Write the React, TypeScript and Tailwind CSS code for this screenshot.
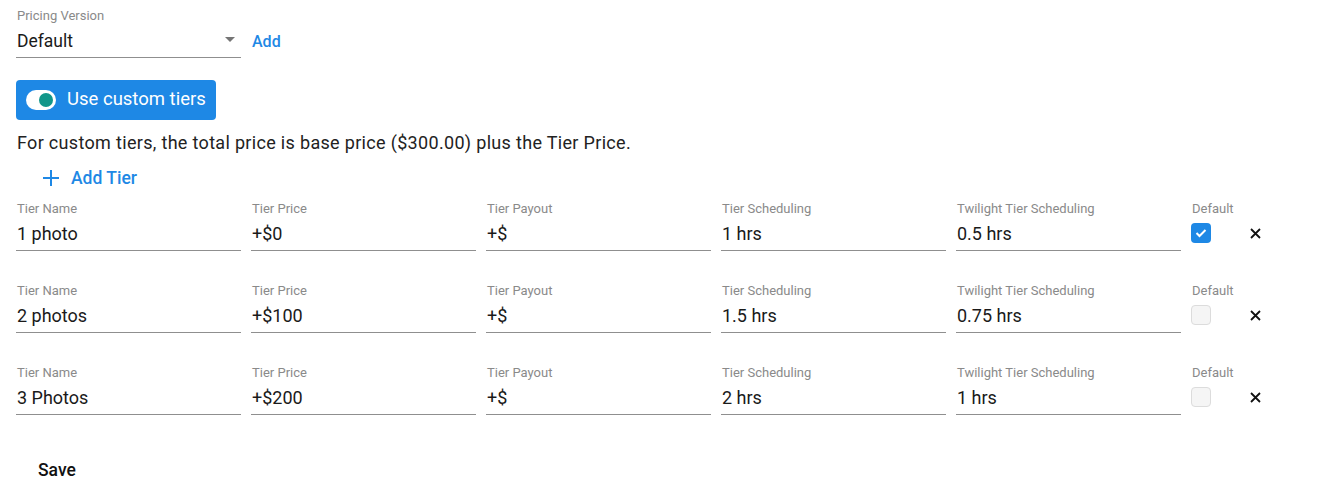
import React from 'react';

const tiers = [
  { name: '1 photo', price: '+$0', payout: '+$', sched: '1 hrs', twilight: '0.5 hrs', isDefault: true },
  { name: '2 photos', price: '+$100', payout: '+$', sched: '1.5 hrs', twilight: '0.75 hrs', isDefault: false },
  { name: '3 Photos', price: '+$200', payout: '+$', sched: '2 hrs', twilight: '1 hrs', isDefault: false },
];

const Field: React.FC<{ label: string; value: string }> = ({ label, value }) => (
  <div className="w-[225px] flex flex-col">
    <span className="text-[13px] leading-[14px] text-[#8a8a8a] pl-px">{label}</span>
    <div className="h-[35px] pt-[6px] leading-[24px] border-b border-[#8f8f8f] text-[18px] text-[#1a1a1a] pl-px">
      {value}
    </div>
  </div>
);

const App: React.FC = () => {
  return (
    <div className="w-[1342px] h-[494px] bg-white font-['Roboto',sans-serif] text-[#1a1a1a] px-4 pt-[9px]">
      {/* Pricing version select */}
      <div className="flex items-end gap-[11px]">
        <div className="w-[225px] flex flex-col">
          <span className="text-[13px] leading-[14px] text-[#8a8a8a] pl-px">Pricing Version</span>
          <div className="h-[35px] pt-[6px] leading-[24px] flex justify-between border-b border-[#8f8f8f] text-[17.5px] pl-px pr-[6px]">
            <span>Default</span>
            <svg className="mt-[8px]" width="10" height="5" viewBox="0 0 10 5"><path d="M0 0h10L5 5z" fill="#757575" /></svg>
          </div>
        </div>
        <button className="text-[16px] font-medium text-[#1e88e5] mb-[4px]">Add</button>
      </div>

      {/* Custom tiers toggle */}
      <button className="mt-[22px] w-[200px] h-[40px] rounded-[4px] bg-[#1e88e5] flex items-center gap-[11px] pl-[10px] text-white text-[18.5px]">
        <span className="w-[30px] h-[20px] rounded-full bg-white flex items-center justify-end pr-[3px]">
          <span className="w-[14px] h-[14px] rounded-full bg-[#11968a]" />
        </span>
        Use custom tiers
      </button>

      <p className="mt-[11px] text-[18px] leading-[24px] tracking-[0.32px] pl-px text-[#222]">
        For custom tiers, the total price is base price ($300.00) plus the Tier Price.
      </p>

      <button className="mt-[11px] h-[24px] ml-[26px] flex items-center gap-[11px] text-[#1e88e5] text-[17.5px] font-medium">
        <svg width="18" height="18" viewBox="0 0 18 18"><path d="M9 1v16M1 9h16" stroke="#1e88e5" strokeWidth="2" /></svg>
        Add Tier
      </button>

      {/* Tiers */}
      <div className="mt-[12px] flex flex-col gap-[33px]">
        {tiers.map((t) => (
          <div key={t.name} className="flex items-start gap-[10px]">
            <Field label="Tier Name" value={t.name} />
            <Field label="Tier Price" value={t.price} />
            <Field label="Tier Payout" value={t.payout} />
            <Field label="Tier Scheduling" value={t.sched} />
            <Field label="Twilight Tier Scheduling" value={t.twilight} />
            <div className="flex flex-col">
              <span className="text-[13px] leading-[14px] text-[#8a8a8a] pl-px">Default</span>
              <div className="mt-[7px] flex items-center">
                {t.isDefault ? (
                  <span className="w-[20px] h-[20px] rounded-[4px] bg-[#1e88e5] flex items-center justify-center">
                    <svg width="12" height="10" viewBox="0 0 12 10"><path d="M1.5 5l3 3 6-6" stroke="white" strokeWidth="2" fill="none" /></svg>
                  </span>
                ) : (
                  <span className="w-[20px] h-[20px] rounded-[4px] bg-[#f5f5f5] border border-[#dcdcdc]" />
                )}
                <svg className="ml-[39px]" width="11" height="11" viewBox="0 0 11 11"><path d="M1 1l9 9M10 1l-9 9" stroke="#111" strokeWidth="1.8" /></svg>
              </div>
            </div>
          </div>
        ))}
      </div>

      <button className="mt-[42px] h-[24px] ml-[22px] text-[17.5px] font-medium text-[#111]">Save</button>
    </div>
  );
};

export default App;
